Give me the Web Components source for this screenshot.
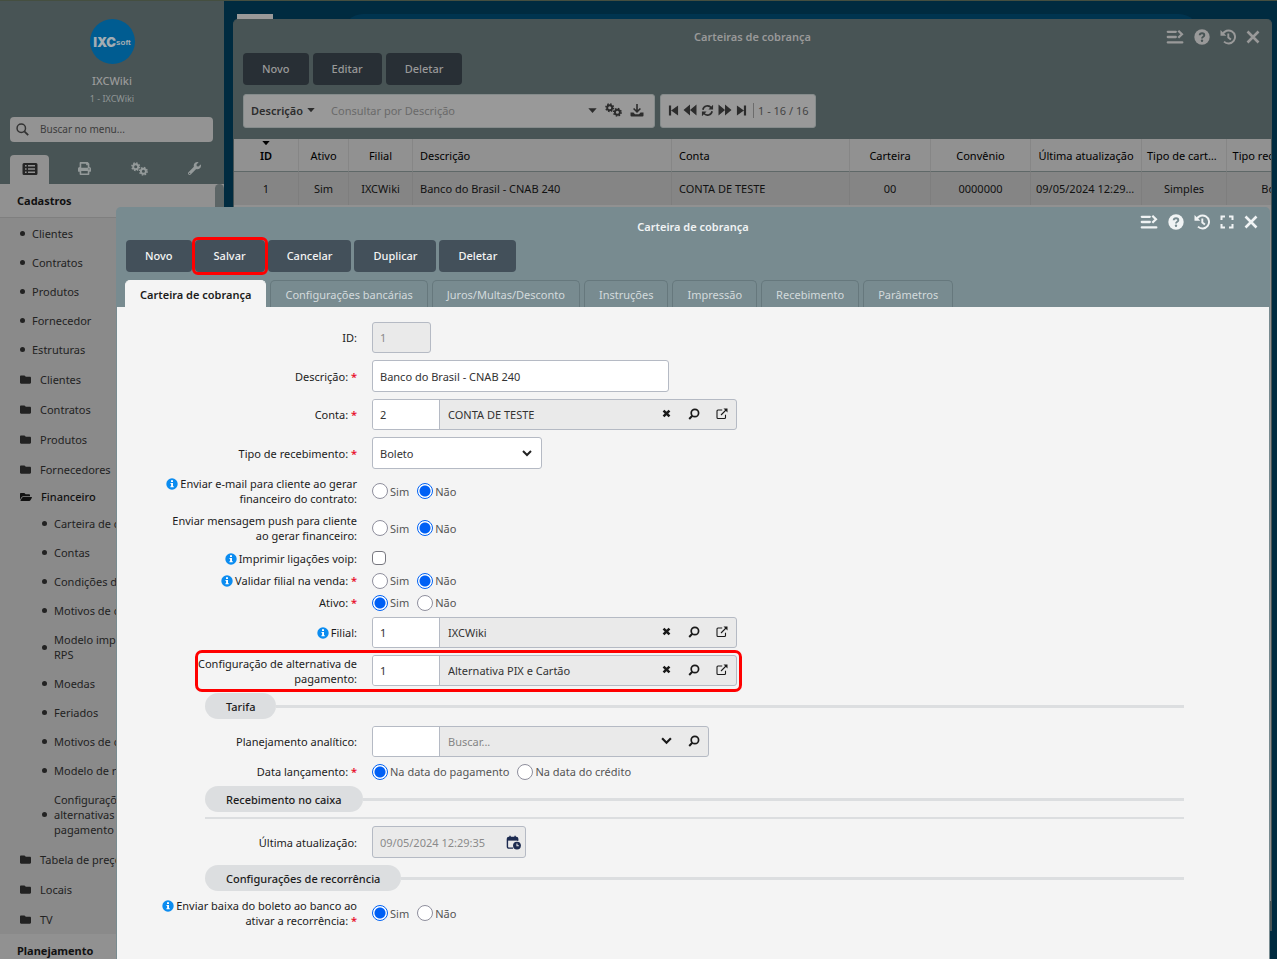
<!DOCTYPE html>
<html lang="pt-BR">
<head>
<meta charset="utf-8">
<title>Carteira de cobrança</title>
<style>
html, body { margin: 0; height: 100%; }
body { font: 11px/15px "Noto Sans", sans-serif; color: #222; background: #002b40; overflow: hidden; }
</style>
</head>
<body>
<ixc-app></ixc-app>

<script>
const cog = (x, y, r) => `<g fill="none" stroke="currentColor" transform="translate(${x} ${y})"><circle r="${r}" stroke-width="${r * .75}"/><circle r="${r * 1.5}" stroke-width="${r * .6}" stroke-dasharray="${r * .62} ${r * .558}"/></g>`;
const ICONS = {
  search: ['0 0 16 16', '<g fill="none" stroke="currentColor" stroke-width="1.8"><circle cx="6.5" cy="6.5" r="5.2"/><path d="M10.3 10.3 15 15" stroke-width="2.2"/></g>'],
  lens: ['0 0 12 12', '<g fill="none" stroke="currentColor" stroke-width="1.7"><circle cx="6.9" cy="5" r="3.7"/><path d="M4.3 7.8 1.2 11" stroke-width="2"/></g>'],
  list: ['0 0 16 14', '<path fill="currentColor" fill-rule="evenodd" d="M2 1h12a1.5 1.5 0 0 1 1.5 1.5v9A1.5 1.5 0 0 1 14 13H2A1.5 1.5 0 0 1 .5 11.500v-9A1.500 1.500 0 0 1 2 1zM3 3v1.600h1.600V3zm3 0v1.600h7V3zM3 6.200v1.600h1.600V6.200zm3 0v1.600h7V6.200zM3 9.400V11h1.600V9.400zm3 0V11h7V9.400z"/>'],
  print: ['0 0 512 512', '<path fill="currentColor" d="M448 192V77.250c0-8.490-3.370-16.620-9.370-22.630L393.370 9.370c-6-6-14.140-9.370-22.630-9.370H96C78.330 0 64 14.330 64 32v160c-35.350 0-64 28.650-64 64v112c0 8.840 7.160 16 16 16h48v96c0 17.670 14.330 32 32 32h320c17.670 0 32-14.330 32-32v-96h48c8.840 0 16-7.160 16-16V256c0-35.350-28.650-64-64-64zm-64 256H128v-96h256v96zm0-224H128V64h192v48c0 8.840 7.160 16 16 16h48v96zm48 72c-13.250 0-24-10.750-24-24 0-13.260 10.750-24 24-24s24 10.740 24 24c0 13.250-10.750 24-24 24z"/>'],
  cogs: ['0 0 17 14', cog(4.700, 4.700, 2.500) + cog(12.400, 9.300, 2.500)],
  wrench: ['0 0 512 512', '<path fill="currentColor" d="M507.730 109.100c-2.240-9.030-13.540-12.090-20.120-5.510l-74.360 74.360-67.880-11.310-11.310-67.880 74.360-74.360c6.620-6.620 3.430-17.900-5.660-20.160-47.380-11.740-99.550.910-136.580 37.930-39.640 39.640-50.550 97.100-34.050 147.200L18.740 402.760c-24.990 24.990-24.990 65.510 0 90.500 24.990 24.990 65.510 24.990 90.500 0l213.210-213.210c50.120 16.710 107.470 5.680 147.370-34.220 37.070-37.070 49.700-89.320 37.910-136.730zM64 472c-13.250 0-24-10.750-24-24 0-13.260 10.750-24 24-24s24 10.740 24 24c0 13.250-10.750 24-24 24z"/>'],
  folder: ['0 0 512 512', '<path fill="currentColor" d="M464 128H272l-64-64H48C21.490 64 0 85.490 0 112v288c0 26.510 21.490 48 48 48h416c26.510 0 48-21.490 48-48V176c0-26.510-21.490-48-48-48z"/>'],
  folderopen: ['0 0 576 512', '<path fill="currentColor" d="M572.694 292.093L500.270 416.248A63.997 63.997 0 0 1 444.989 448H45.025c-18.523 0-30.064-20.093-20.731-36.093l72.424-124.155A64 64 0 0 1 152 256h399.964c18.523 0 30.064 20.093 20.730 36.093zM152 224h328v-48c0-26.510-21.490-48-48-48H272l-64-64H48C21.490 64 0 85.490 0 112v278.046l69.077-118.418C86.214 242.250 117.989 224 152 224z"/>'],
  caret: ['0 0 8 6', '<path fill="currentColor" d="M.3 1h7.400L4 5.300z"/>'],
  download: ['0 0 14 14', '<path fill="none" stroke="currentColor" stroke-width="1.600" d="M7 1v7.500M3.600 5.500 7 8.900l3.400-3.400"/><path fill="currentColor" d="M.5 9.500h3L5 11.200h4l1.500-1.700h3v3a1 1 0 0 1-1 1h-11a1 1 0 0 1-1-1z"/>'],
  first: ['0 0 12 12', '<path fill="currentColor" d="M1 .5h2.400v11H1zM11 .5v11L3.400 6z"/>'],
  back: ['0 0 14 12', '<path fill="currentColor" d="M7 .5v11L.5 6zM13.500.5v11L7 6z"/>'],
  fwd: ['0 0 14 12', '<path fill="currentColor" d="M.5.5v11L7 6zM7 .5v11L13.500 6z"/>'],
  last: ['0 0 12 12', '<path fill="currentColor" d="M8.600.5H11v11H8.600zM1 .5v11L8.600 6z"/>'],
  refresh: ['0 0 14 14', '<path fill="none" stroke="currentColor" stroke-width="1.800" d="M2 6.200A5.100 5.100 0 0 1 11 4M12 7.800A5.100 5.100 0 0 1 3 10"/><path fill="currentColor" d="M13 .8v5H8zM1 13.200v-5h5z"/>'],
  menu: ['0 0 18 16', '<path fill="none" stroke="currentColor" stroke-width="2.300" stroke-linecap="round" d="M1.800 2.800h8M1.800 8h8M1.800 13.400h14.500"/><path fill="none" stroke="currentColor" stroke-width="2.300" d="m12.300 1.800 3.600 3.500-3.600 3.500"/>'],
  help: ['0 0 16 16', '<circle cx="8" cy="8" r="7.700" fill="currentColor"/><path fill="none" stroke="var(--hole)" stroke-width="1.900" d="M5.700 6.300C5.800 3.600 10.300 3.700 10.300 6.200 10.300 7.900 8 7.700 8 9.600"/><circle cx="8" cy="11.700" r="1.200" fill="var(--hole)"/>'],
  history: ['0 0 16 16', '<path fill="none" stroke="currentColor" stroke-width="1.900" d="M2.600 5.300A6.500 6.500 0 1 1 4 12.600M8.300 4.500v4l2.600 2"/><path fill="currentColor" d="M.5.900v5.800h5.800z"/>'],
  full: ['0 0 14 14', '<path fill="none" stroke="currentColor" stroke-width="2" d="M1.500 5V1.500H5M9 1.500h3.500V5M12.500 9v3.500H9M5 12.500H1.500V9"/>'],
  close: ['0 0 14 14', '<path fill="none" stroke="currentColor" stroke-width="2.600" d="m1.500 1.500 11 11M12.500 1.500l-11 11"/>'],
  cross: ['0 0 10 10', '<path fill="none" stroke="currentColor" stroke-width="2.800" d="m1.700 1.700 6.600 6.600M8.300 1.700 1.700 8.300"/>'],
  open: ['0 0 12 12', '<path fill="none" stroke="currentColor" stroke-width="1.100" d="M6.200 2H2a1 1 0 0 0-1 1v6.500a1 1 0 0 0 1 1h6.500a1 1 0 0 0 1-1V6.800M5 7l5.500-5.500"/><path fill="currentColor" d="M7.500.5h4v4z"/>'],
  chevron: ['0 0 10 8', '<path fill="none" stroke="currentColor" stroke-width="2" d="m1 2 4 4 4-4"/>'],
  info: ['0 0 12 12', '<circle cx="6" cy="6" r="5.700" fill="currentColor"/><path fill="#fff" d="M5 2.300h2v1.700H5zM4.500 5H7v3.200h.8v1.100H4.400V8.200h.7V6h-.6z"/>'],
  calendar: ['0 0 16 16', '<path fill="none" stroke="currentColor" stroke-width="1.500" d="M7.500 14H3a1.500 1.500 0 0 1-1.500-1.500V4A1.500 1.500 0 0 1 3 2.700h8A1.500 1.500 0 0 1 12.500 4v2M4.300.700v3M9.700.700v3"/><path fill="currentColor" d="M1.500 3h11v3h-11z"/><circle cx="11.700" cy="11.300" r="4.200" fill="currentColor"/><path fill="none" stroke="#eaeaea" stroke-width="1.100" d="M11.700 9v2.500h2"/>'],
};

class BaseElement extends HTMLElement {
  connectedCallback() {
    if (this.shadowRoot) return;
    const t = document.createElement('template');
    t.innerHTML = `<style>*{box-sizing:border-box}button,input,select{font:inherit;color:inherit;margin:0}button{border:0;padding:0;background:none}${this.css()}</style>${this.html()}`;
    this.attachShadow({ mode: 'open' }).append(t.content.cloneNode(true));
  }
  a(name, fallback = '') { return this.getAttribute(name) ?? fallback; }
}

customElements.define('ixc-icon', class extends BaseElement {
  css() { return `:host{display:inline-flex;flex:none;width:${this.a('w', '12')}px;height:${this.a('h', this.a('w', '12'))}px}svg{display:block;width:100%;height:100%}`; }
  html() { const [box, body] = ICONS[this.a('name')]; return `<svg viewBox="${box}" aria-hidden="true">${body}</svg>`; }
});

customElements.define('ixc-button', class extends BaseElement {
  css() { return `
    :host{display:block;position:relative}
    button{display:block;height:32px;padding:0 19px 2px;border-radius:4px;background:var(--btn);color:var(--btn-text);font-weight:500}
    :host([marked])::after{content:"";position:absolute;inset:-3px;border:3px solid #f00;border-radius:6px;pointer-events:none}`; }
  html() { return `<button type="button"><slot></slot></button>`; }
});

/* Window frame: title, window controls, toolbar and body slots */
customElements.define('ixc-window', class extends BaseElement {
  css() { return `
    :host{display:flex;flex-direction:column;border-radius:5px 5px 0 0;background:var(--frame);border:0 solid var(--frame);border-width:0 1px;overflow:hidden;--hole:var(--frame)}
    header{display:grid;grid-template-columns:1fr auto 1fr;flex:none;height:33px;color:var(--title)}
    h2{grid-column:2;margin:0;padding-top:var(--title-top);font:600 11px/26px "Noto Sans",sans-serif}
    nav{display:flex;justify-content:flex-end;align-items:center;gap:10px;padding-right:11px;height:var(--ctl-height)}
    nav button{display:flex}
    .body{flex:1;min-height:0;display:flex;flex-direction:column}`; }
  html() {
    const b = (n, w, h, l) => `<button type="button" aria-label="${l}"><ixc-icon name="${n}" w="${w}" h="${h}"></ixc-icon></button>`;
    return `<header><h2>${this.a('heading')}</h2><nav>${b('menu', 18, 16, 'Menu')}${b('help', 16, 16, 'Ajuda')}${b('history', 16, 16, 'Histórico')}${this.hasAttribute('resizable') ? b('full', 14, 14, 'Tela cheia') : ''}${b('close', 14, 14, 'Fechar')}</nav></header>
    <slot name="toolbar"></slot><div class="body"><slot></slot></div>`;
  }
});

customElements.define('ixc-sidebar', class extends BaseElement {
  css() { return `
    :host{display:flex;flex-direction:column;overflow:hidden;background:#8a8a8a;color:#222}
    .top{flex:none;background:#485455;height:183px;display:flex;flex-direction:column;align-items:center;padding-top:18px}
    .logo{width:45px;height:45px;border-radius:50%;background:#005c91;color:#a3adb3;display:flex;align-items:center;justify-content:center;font:900 13px/14px Inter,sans-serif}
    .logo small{font:700 8px/14px "Liberation Sans",sans-serif;padding-top:3px}
    .name{color:#9a9a9a;font-weight:500;margin-top:9px}
    .branch{color:#909696;font-size:9px;margin-top:3px}
    .find{display:flex;align-items:center;gap:11px;align-self:stretch;margin:11px 11px 0 10px;height:25px;border-radius:4px;background:#939393;padding:0 6px;color:#333}
    .find input{flex:1;min-width:0;border:0;padding:0;background:none;font-size:10px}
    input::placeholder{color:#3c3c3c;opacity:1}
    .tabs{display:grid;grid-template-columns:repeat(4,55px);align-self:stretch;margin-top:13px;padding-left:2px;color:#949a9a}
    .tabs button{display:flex;justify-content:center;align-items:center;height:29px;padding-bottom:2px;margin:0 8px;border-radius:4px 4px 0 0}
    .tabs .on{background:#919191;color:#252525}
    h3{flex:none;margin:0;height:34px;padding-left:17px;font:700 11px/34px "Noto Sans",sans-serif;color:#111;background:#919191;border-bottom:1px solid #7f7f7f}
    .scroll{position:relative;display:flex;flex-direction:column}
    .scroll::after{content:"";position:absolute;top:0;right:0;width:9px;height:300px;border-radius:5px;background:#5c6566}
    ul{list-style:none;margin:0;padding:1px 0 0}
    ul ul{padding:0}
    a{display:flex;align-items:center;color:inherit;text-decoration:none;white-space:nowrap;min-height:29px;padding:7px 0 7px 20px;gap:9px}
    a.dot{gap:7px}
    a.dot::before{content:"";width:5px;height:5px;border-radius:50%;background:#222;flex:none}
    a.folder{min-height:30px}
    a.open{min-height:25px;height:25px;font-weight:500;color:#111}
    ul ul a{padding-left:42px}
    a span span{display:block}`; }
  html() {
    const dot = (...t) => `<li><a class="dot" href="#"><span>${t.map(x => `<span>${x}</span>`).join('')}</span></a></li>`;
    const folder = t => `<li><a class="folder" href="#"><ixc-icon name="folder" w="11"></ixc-icon>${t}</a></li>`;
    return `<div class="top">
      <div class="logo">IXC<small>soft</small></div><div class="name">IXCWiki</div><div class="branch">1 - IXCWiki</div>
      <label class="find"><ixc-icon name="search" w="13"></ixc-icon><input type="text" aria-label="Buscar no menu" placeholder="Buscar no menu..."></label>
      <div class="tabs"><button class="on" aria-label="Menu"><ixc-icon name="list" w="16" h="14"></ixc-icon></button><button aria-label="Imprimir"><ixc-icon name="print" w="13"></ixc-icon></button><button aria-label="Configurações"><ixc-icon name="cogs" w="17" h="14"></ixc-icon></button><button aria-label="Ferramentas"><ixc-icon name="wrench" w="13"></ixc-icon></button></div>
    </div>
    <div class="scroll"><h3>Cadastros</h3>
    <ul>${['Clientes', 'Contratos', 'Produtos', 'Fornecedor', 'Estruturas'].map(x => dot(x)).join('')}
    ${['Clientes', 'Contratos', 'Produtos', 'Fornecedores'].map(folder).join('')}
    <li><a class="open" href="#"><ixc-icon name="folderopen" w="12"></ixc-icon>Financeiro</a><ul>
    ${dot('Carteira de cobrança')}${dot('Contas')}${dot('Condições de pagamento')}${dot('Motivos de cancelamento')}${dot('Modelo impressão', 'RPS')}${dot('Moedas')}${dot('Feriados')}${dot('Motivos de cobrança')}${dot('Modelo de recibo')}${dot('Configurações', 'alternativas', 'pagamento')}</ul></li>
    ${['Tabela de preços', 'Locais', 'TV'].map(folder).join('')}</ul>
    <h3>Planejamento</h3></div>`;
  }
});

customElements.define('ixc-grid-search', class extends BaseElement {
  css() { return `
    :host{display:flex;gap:5px;padding:9px 9px 11px;height:54px;color:#2c2c2c}
    .box{display:flex;align-items:center;height:34px;background:#999;border:1px solid #858b8b;border-radius:3px;padding-bottom:2px}
    button{display:flex;align-items:center}
    .q{width:412px;padding-left:7px;padding-right:10px;gap:8px}
    .q .by{gap:4px;font-weight:600;margin-right:8px}
    input{flex:1;min-width:0;border:0;padding:0;background:none}
    input::placeholder{color:#6a6a6a;opacity:1}
    .p{padding-left:7px;padding-right:6px;gap:4px}
    .p span{border-left:1px solid #6c6c6c;padding-left:4px;margin-left:2px;color:#444}`; }
  html() {
    const b = (n, w, h, l) => `<button type="button" aria-label="${l}"><ixc-icon name="${n}" w="${w}" h="${h}"></ixc-icon></button>`;
    return `<div class="box q"><button class="by" type="button">Descrição<ixc-icon name="caret" w="8" h="6"></ixc-icon></button><input type="text" aria-label="Consultar" placeholder="Consultar por Descrição">${b('caret', 9, 7, 'Opções')}${b('cogs', 17, 14, 'Configurar')}${b('download', 14, 14, 'Exportar')}</div>
    <div class="box p">${b('first', 11, 11, 'Primeira')}${b('back', 14, 12, 'Anterior')}${b('refresh', 13, 13, 'Atualizar')}${b('fwd', 14, 12, 'Próxima')}${b('last', 11, 11, 'Última')}<span>1 - 16 / 16</span></div>`;
  }
});

customElements.define('ixc-grid', class extends BaseElement {
  css() { return `
    :host{display:block;flex:1;background:#919191;overflow:hidden;color:#111}
    table{table-layout:fixed;width:1096px;border-collapse:separate;border-spacing:0}
    th,td{height:33px;padding:0 5px;border-right:1px solid #868686;font-weight:400;text-align:center;overflow:hidden;text-overflow:ellipsis;white-space:nowrap}
    th{border-bottom:1px solid #5f6868;color:#000}
    td{background:#858585;border-right-color:#7e7e7e}
    .l{text-align:left;padding-left:7px}
    .sort{font-weight:600;position:relative}
    .sort ixc-icon{position:absolute;top:1px;left:50%;margin-left:-4px}`; }
  html() {
    const w = [65, 50, 64, 259, 178, 81, 100, 111, 85, 103];
    const cls = i => i === 3 || i === 4 ? ' class="l"' : '';
    return `<table><colgroup>${w.map(x => `<col style="width:${x}px">`).join('')}</colgroup>
    <thead><tr><th class="sort">ID<ixc-icon name="caret" w="8" h="6"></ixc-icon></th>${['Ativo', 'Filial', 'Descrição', 'Conta', 'Carteira', 'Convênio', 'Última atualização', 'Tipo de carteira', 'Tipo recebimento'].map((t, i) => `<th${cls(i + 1)}>${t}</th>`).join('')}</tr></thead>
    <tbody><tr>${['1', 'Sim', 'IXCWiki', 'Banco do Brasil - CNAB 240', 'CONTA DE TESTE', '00', '0000000', '09/05/2024 12:29:35', 'Simples', 'Boleto'].map((t, i) => `<td${cls(i)}>${t}</td>`).join('')}</tr></tbody></table>`;
  }
});

customElements.define('ixc-tabs', class extends BaseElement {
  css() { return `
    :host{display:flex;flex:none;gap:4px;padding:8px 8px 0;height:35px}
    button{height:27px;padding:0 14px;border:1px solid #66787d;border-bottom:0;border-radius:5px 5px 0 0;color:#d3dadc;white-space:nowrap}
    button[aria-selected=true]{background:#f4f4f4;border-color:#f4f4f4;color:#1c1c1c;font-weight:600}`; }
  html() { return this.a('items').split('|').map((t, i) => `<button type="button" role="tab" aria-selected="${i === 0}">${t}</button>`).join(''); }
});

/* One labelled line of the form; the control is chosen by "kind" */
customElements.define('ixc-row', class extends BaseElement {
  css() { return `
    :host{display:grid;grid-template-columns:240px auto;column-gap:15px;align-items:center;justify-content:start;position:relative}
    :host([kind=check]){min-height:16px}
    :host([marked])::after{content:"";box-sizing:border-box;position:absolute;left:78px;width:547px;top:-5px;bottom:-6px;border:3px solid #f00;border-radius:7px;pointer-events:none}
    .label{justify-self:end;width:198px;text-align:right;color:#1c1c1c}
    .label ixc-icon{color:#0b8cf0;vertical-align:-2px;margin-right:2px}
    .req{color:#e8112d;font-weight:600}
    input[type=text],select{height:32px;border:1px solid #b5bac4;border-radius:3px;background:#fff;padding:0 7px;color:#333;outline:0;width:${this.a('width', '365')}px}
    input[type=text]:disabled{background:#eaeaea;color:#8a8a8a}
    :host([off]) input[type=text]{height:31px}
    .lookup{display:flex;align-items:center;width:${this.a('width', '365')}px;height:31px;border:1px solid #b5bac4;border-radius:3px;background:#eaeaea;color:#222}
    .lookup input[type=text]{border:0;height:29px;border-radius:2px 0 0 2px;min-width:0}
    .lookup input.code[type=text]{width:67px;flex:none;border-right:1px solid #b5bac4}
    .lookup input.text[type=text]{flex:1;padding:0 8px;background:none}
    .text::placeholder{color:#858585;opacity:1}
    .lookup button{width:28px;height:29px;display:flex;justify-content:center;align-items:center;padding-bottom:2px;color:#1a1a1a}
    .select,.date{position:relative;display:flex;align-items:center}
    select{appearance:none}
    .select ixc-icon,.date button{position:absolute;right:10px;pointer-events:none}
    .date button{right:5px;color:#1d2b50;display:flex}
    .radios{display:flex;align-items:center;gap:8px;height:15px;color:#555}
    .radios label{display:flex;align-items:center;gap:2px}
    input[type=radio]{appearance:none;width:16px;height:16px;border:1px solid #8f8f9d;border-radius:50%;background:#fff;flex:none}
    input[type=radio]:checked{border-color:#0062f5;background:radial-gradient(circle,#0060f5 0 5px,#fff 6px)}
    input[type=checkbox]{appearance:none;display:block;width:14px;height:14px;border:1px solid #77777f;border-radius:4px;background:#fff}`; }
  html() {
    const kind = this.a('kind'), v = this.a('value'), req = this.hasAttribute('required') ? ' <span class="req">*</span>' : '';
    const text = `${this.hasAttribute('info') ? '<ixc-icon name="info" w="12"></ixc-icon>' : ''}${this.a('label')}:${req}`;
    const b = (n, w, l) => `<button type="button" aria-label="${l}"><ixc-icon name="${n}" w="${w}"></ixc-icon></button>`;
    const label = kind === 'radio' ? `<span class="label" id="l">${text}</span>` : `<label class="label" for="c">${text}</label>`;
    const lens = b('lens', 12, 'Pesquisar');
    const control = {
      text: () => `<input type="text" id="c" value="${v}"${this.hasAttribute('off') ? ' disabled' : ''}>`,
      lookup: () => `<div class="lookup"><input type="text" class="code" id="c" value="${this.a('code')}"><input type="text" class="text" aria-label="${this.a('label')}" value="${v}" placeholder="Buscar...">${v ? b('cross', 9, 'Limpar') + lens + b('open', 12, 'Abrir') : b('chevron', 11, 'Expandir') + lens}</div>`,
      select: () => `<div class="select"><select id="c"><option>${v}</option></select><ixc-icon name="chevron" w="10" h="8"></ixc-icon></div>`,
      date: () => `<div class="date"><input type="text" id="c" value="${v}" disabled><button type="button" aria-label="Calendário"><ixc-icon name="calendar" w="15"></ixc-icon></button></div>`,
      check: () => `<input type="checkbox" id="c">`,
      radio: () => `<div class="radios" role="radiogroup" aria-labelledby="l">${this.a('options', 'Sim|Não').split('|').map(o => `<label><input type="radio" name="r"${o === v ? ' checked' : ''}>${o}</label>`).join('')}</div>`,
    }[kind]();
    return label + control;
  }
});

customElements.define('ixc-section', class extends BaseElement {
  css() { return `
    :host{display:flex;align-items:center;margin:0 85px 0 88px}
    :host([closed]){padding-bottom:5px;border-bottom:2px solid #dcdee0}
    h3{margin:0;padding:0 21px;height:26px;border-radius:13px;background:#dcdee0;font:500 11px/27px "Noto Sans",sans-serif;color:#1c1c1c}
    i{flex:1;height:3px;background:#dcdee0}`; }
  html() { return `<h3><slot></slot></h3><i></i>`; }
});

customElements.define('ixc-app', class extends BaseElement {
  css() { return `
    :host{display:grid;grid-template-columns:224px 1fr;height:100vh;position:relative;overflow:hidden;border-top:1px solid #454f40;box-sizing:border-box}
    .desk{position:relative;min-width:0}
    .bar{display:flex;padding:13px 78px 0 13px;gap:70px}
    .bar b{width:36px;height:30px;background:#999}
    .bar i{flex:1;height:40px;border-radius:20px;background:#00344f}
    .list{position:absolute;inset:18px 5px 28px 9px;padding-bottom:30px;--frame:#485455;--title:#999;--btn:#282f35;--btn-text:#999;--title-top:5px;--ctl-height:36px}
    .edit{position:absolute;inset:206px 7px 0 116px;--frame:#788b90;--title:#f0f3f4;--btn:#43505a;--btn-text:#f4f4f4;--title-top:7px;--ctl-height:30px}
    .tools{display:flex;flex:none;gap:4px;padding:1px 9px 0}
    .edit .tools{gap:3px;padding:0 9px}
    form{flex:1;display:flex;flex-direction:column;gap:7px;padding-top:15px;background:#f4f4f4}`; }
  html() { return `
    <ixc-sidebar></ixc-sidebar>
    <div class="desk"><div class="bar"><b></b><i></i></div>
      <ixc-window class="list" heading="Carteiras de cobrança">
        <div slot="toolbar" class="tools"><ixc-button>Novo</ixc-button><ixc-button>Editar</ixc-button><ixc-button>Deletar</ixc-button></div>
        <ixc-grid-search></ixc-grid-search>
        <ixc-grid></ixc-grid>
      </ixc-window></div>
    <ixc-window class="edit" heading="Carteira de cobrança" resizable>
      <div slot="toolbar" class="tools"><ixc-button>Novo</ixc-button><ixc-button marked>Salvar</ixc-button><ixc-button>Cancelar</ixc-button><ixc-button>Duplicar</ixc-button><ixc-button>Deletar</ixc-button></div>
      <ixc-tabs items="Carteira de cobrança|Configurações bancárias|Juros/Multas/Desconto|Instruções|Impressão|Recebimento|Parâmetros"></ixc-tabs>
      <form>
        <ixc-row kind="text" label="ID" value="1" width="59" off></ixc-row>
        <ixc-row kind="text" label="Descrição" required value="Banco do Brasil - CNAB 240" width="297"></ixc-row>
        <ixc-row kind="lookup" label="Conta" required code="2" value="CONTA DE TESTE"></ixc-row>
        <ixc-row kind="select" label="Tipo de recebimento" required value="Boleto" width="170"></ixc-row>
        <ixc-row kind="radio" label="Enviar e-mail para cliente ao gerar financeiro do contrato" info value="Não"></ixc-row>
        <ixc-row kind="radio" label="Enviar mensagem push para cliente ao gerar financeiro" value="Não"></ixc-row>
        <ixc-row kind="check" label="Imprimir ligações voip" info></ixc-row>
        <ixc-row kind="radio" label="Validar filial na venda" info required value="Não"></ixc-row>
        <ixc-row kind="radio" label="Ativo" required value="Sim"></ixc-row>
        <ixc-row kind="lookup" label="Filial" info code="1" value="IXCWiki"></ixc-row>
        <ixc-row kind="lookup" label="Configuração de alternativa de pagamento" code="1" value="Alternativa PIX e Cartão" marked></ixc-row>
        <ixc-section>Tarifa</ixc-section>
        <ixc-row kind="lookup" label="Planejamento analítico" width="337"></ixc-row>
        <ixc-row kind="radio" label="Data lançamento" required options="Na data do pagamento|Na data do crédito" value="Na data do pagamento"></ixc-row>
        <ixc-section closed>Recebimento no caixa</ixc-section>
        <ixc-row kind="date" label="Última atualização" value="09/05/2024 12:29:35" width="154"></ixc-row>
        <ixc-section>Configurações de recorrência</ixc-section>
        <ixc-row kind="radio" label="Enviar baixa do boleto ao banco ao ativar a recorrência" info required value="Sim"></ixc-row>
      </form>
    </ixc-window>`; }
});
</script>
</body>
</html>
